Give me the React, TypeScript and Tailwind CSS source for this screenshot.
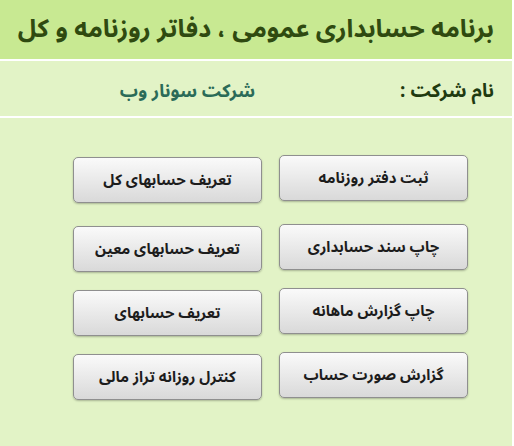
const leftButtons = [
  "تعریف حسابهای کل",
  "تعریف حسابهای معین",
  "تعریف حسابهای",
  "کنترل روزانه تراز مالی",
];

const rightButtons = [
  "ثبت دفتر روزنامه",
  "چاپ سند حسابداری",
  "چاپ گزارش ماهانه",
  "گزارش صورت حساب",
];

function MenuButton({ label }: { label: string }) {
  return (
    <button className="w-[189px] h-[46px] shrink-0 rounded-[5px] border border-[#8f8f8f] bg-gradient-to-b from-[#fafafa] to-[#d9d9d9] shadow-[0_1px_2px_rgba(0,0,0,0.25)] text-[15px] font-bold text-[#1c1c1c] first:mb-[5px]">
      {label}
    </button>
  );
}

export default function App() {
  return (
    <div
      dir="rtl"
      className="w-[514px] h-[446px] bg-white pr-[2px] overflow-hidden"
      style={{ fontFamily: '"Noto Sans Arabic", "DejaVu Sans", sans-serif' }}
    >
      <div className="w-[512px] h-full flex flex-col bg-[#e2f3c6]">
        {/* Title */}
        <div className="h-[61px] bg-[#c8e992] flex items-center pr-[18px] border-b-2 border-white">
          <h1 className="text-[25px] font-bold text-[#2f4a10] leading-none">
            برنامه حسابداری عمومی ، دفاتر روزنامه و کل
          </h1>
        </div>

        {/* Company */}
        <div className="h-[57px] flex items-center pr-[18px] pt-[5px] border-b-2 border-white">
          <span className="w-[239px] text-[19px] font-bold text-[#1f3a10]">نام شرکت :</span>
          <span className="text-[18px] font-bold text-[#2b6b58]">شرکت سونار وب</span>
        </div>

        {/* Buttons */}
        <div className="flex gap-[17px] pr-[44px] pt-[37px]">
          <div className="flex flex-col gap-[18px]">
            {rightButtons.map((b) => (
              <MenuButton key={b} label={b} />
            ))}
          </div>
          <div className="flex flex-col gap-[18px] pt-[2px]">
            {leftButtons.map((b) => (
              <MenuButton key={b} label={b} />
            ))}
          </div>
        </div>
      </div>
    </div>
  );
}
